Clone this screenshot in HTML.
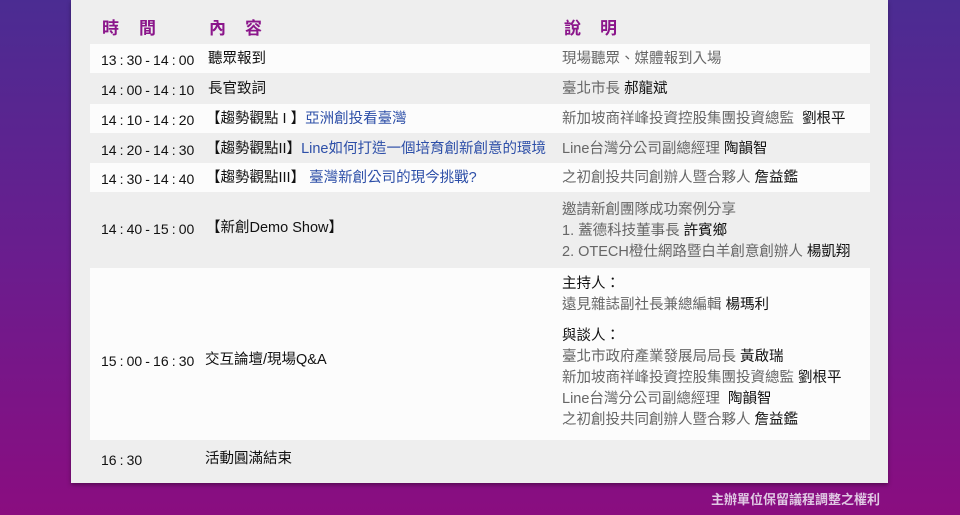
<!DOCTYPE html>
<html><head><meta charset="utf-8"><style>
*{margin:0;padding:0;box-sizing:border-box}
body{width:960px;height:515px;overflow:hidden;position:relative;background:linear-gradient(180deg,#4b2c92 0%,#6a1d8e 50%,#8a0d80 100%);font-family:"Liberation Sans","Noto Sans CJK TC",sans-serif;font-size:14.5px;color:#111}
.panel{position:absolute;left:71px;top:0;width:817px;height:483px;background:#eeeeee;box-shadow:0 2px 4px rgba(0,0,0,.35)}
.row{position:absolute;left:90px;width:780px;background:#fcfcfc}
.t{position:absolute;white-space:nowrap;line-height:17px}
.tm{font-size:14px;word-spacing:-0.8px}
.h{position:absolute;top:14px;font-size:17px;font-weight:bold;color:#8b168b}
.g{color:#666}
.b{color:#2d4fa8}
.foot{position:absolute;left:711px;top:489px;color:#e0c8e4;font-size:13px;font-weight:bold;white-space:nowrap}
</style></head><body>
<div class="panel"></div>
<div class="h" style="left:102px">時</div><div class="h" style="left:139px">間</div>
<div class="h" style="left:209px">內</div><div class="h" style="left:245px">容</div>
<div class="h" style="left:564px">說</div><div class="h" style="left:600px">明</div>
<div class="row" style="top:44px;height:29px"></div>
<div class="row" style="top:104px;height:29px"></div>
<div class="row" style="top:163px;height:29px"></div>
<div class="row" style="top:268px;height:172px"></div>

<div class="t tm" style="left:101px;top:52px">13 : 30 - 14 : 00</div><div class="t" style="left:208px;top:51px">聽眾報到</div><div class="t g" style="left:562px;top:51px">現場聽眾、媒體報到入場</div>
<div class="t tm" style="left:101px;top:82px">14 : 00 - 14 : 10</div><div class="t" style="left:208px;top:81px">長官致詞</div><div class="t g" style="left:562px;top:81px">臺北市長 <span style="color:#111">郝龍斌</span></div>
<div class="t tm" style="left:101px;top:112px">14 : 10 - 14 : 20</div><div class="t" style="left:206px;top:111px">【趨勢觀點 I 】<span class="b">亞洲創投看臺灣</span></div><div class="t g" style="left:562px;top:111px">新加坡商祥峰投資控股集團投資總監 &nbsp;<span style="color:#111">劉根平</span></div>
<div class="t tm" style="left:101px;top:142px">14 : 20 - 14 : 30</div><div class="t" style="left:206px;top:141px">【趨勢觀點II】<span class="b">Line如何打造一個培育創新創意的環境</span></div><div class="t g" style="left:562px;top:141px">Line台灣分公司副總經理 <span style="color:#111">陶韻智</span></div>
<div class="t tm" style="left:101px;top:171px">14 : 30 - 14 : 40</div><div class="t" style="left:206px;top:170px">【趨勢觀點III】 <span class="b">臺灣新創公司的現今挑戰?</span></div><div class="t g" style="left:562px;top:170px">之初創投共同創辦人暨合夥人 <span style="color:#111">詹益鑑</span></div>
<div class="t tm" style="left:101px;top:221px">14 : 40 - 15 : 00</div><div class="t" style="left:206px;top:220px">【新創Demo Show】</div>
<div class="t g" style="left:562px;top:200px;line-height:21px">邀請新創團隊成功案例分享<br>1. 蓋德科技董事長 <span style="color:#111">許賓鄉</span><br>2. OTECH橙仕網路暨白羊創意創辦人 <span style="color:#111">楊凱翔</span></div>
<div class="t tm" style="left:101px;top:353px">15 : 00 - 16 : 30</div><div class="t" style="left:205px;top:352px">交互論壇/現場Q&amp;A</div>
<div class="t g" style="left:562px;top:274px;line-height:21px"><span style="color:#111">主持人：</span><br>遠見雜誌副社長兼總編輯 <span style="color:#111">楊瑪利</span></div>
<div class="t g" style="left:562px;top:326px;line-height:21px"><span style="color:#111">與談人：</span><br>臺北市政府產業發展局局長 <span style="color:#111">黃啟瑞</span><br>新加坡商祥峰投資控股集團投資總監 <span style="color:#111">劉根平</span><br>Line台灣分公司副總經理 &nbsp;<span style="color:#111">陶韻智</span><br>之初創投共同創辦人暨合夥人 <span style="color:#111">詹益鑑</span></div>
<div class="t tm" style="left:101px;top:452px">16 : 30</div><div class="t" style="left:205px;top:451px">活動圓滿結束</div>
<div class="foot">主辦單位保留議程調整之權利</div>
</body></html>
